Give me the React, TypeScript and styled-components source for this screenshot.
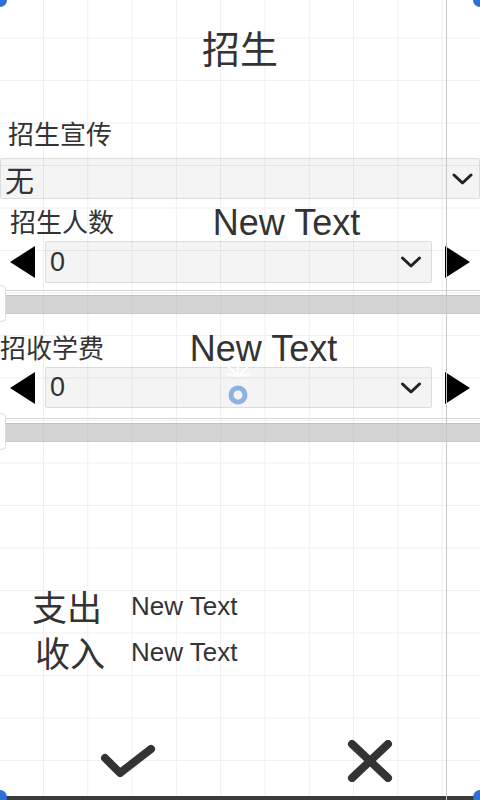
import React from 'react';
import styled, { createGlobalStyle } from 'styled-components';

const GlobalStyle = createGlobalStyle`
  html, body {
    margin: 0;
    padding: 0;
    background: #ffffff;
  }
  * {
    box-sizing: border-box;
  }
`;

const CJK = `"Noto Sans CJK SC", "Noto Sans", sans-serif`;
const LATIN = `"Liberation Sans", Arial, sans-serif`;

const Screen = styled.div`
  position: relative;
  width: 480px;
  height: 800px;
  overflow: hidden;
  display: flex;
  flex-direction: column;
  background-color: #ffffff;
  background-image:
    linear-gradient(to right, #efefef 1px, transparent 1px),
    linear-gradient(to bottom, #efefef 1px, transparent 1px);
  background-size: 44.3px 42.5px;
  background-position: -1.3px 37.5px;
  color: #333333;
`;

const Title = styled.h1`
  margin: 0;
  height: 95px;
  display: flex;
  align-items: center;
  justify-content: center;
  font-family: ${CJK};
  font-size: 38px;
  font-weight: 400;
  color: #333;
  padding-bottom: 2px;
`;

const Label = styled.div<{ $indent?: number }>`
  font-family: ${CJK};
  font-size: 26px;
  line-height: 30px;
  color: #333;
  padding-left: ${p => p.$indent ?? 0}px;
  white-space: nowrap;
`;

const SectionLabel = styled(Label)`
  margin-top: 23px;
`;

const Select = styled.div<{ $height: number }>`
  flex: 1;
  height: ${p => p.$height}px;
  display: flex;
  align-items: center;
  justify-content: space-between;
  background: rgba(0, 0, 0, 0.045);
  border: 1px solid rgba(0, 0, 0, 0.1);
  border-radius: 2px;
`;

const WideSelect = styled(Select)`
  flex: none;
  margin-top: 10px;
  padding: 0 6px 0 4px;
`;

const SelectValue = styled.span<{ $size: number; $cjk?: boolean }>`
  font-family: ${p => (p.$cjk ? CJK : LATIN)};
  font-size: ${p => p.$size}px;
  color: #333;
`;

const HeaderRow = styled.div<{ $right: number; $top: number }>`
  display: flex;
  align-items: center;
  height: 40px;
  margin-top: ${p => p.$top}px;
  padding-right: ${p => p.$right}px;
`;

const Caption = styled.div`
  flex: 1;
  text-align: center;
  font-family: ${LATIN};
  font-size: 36px;
  line-height: 36px;
  color: #333;
  padding-top: 4px;
`;

const StepperRow = styled.div`
  display: flex;
  align-items: center;
  padding: 0 10px;
  gap: 9px;
`;

const StepSelect = styled(Select)`
  padding: 0 8px 0 4px;
  margin-right: 3px;
`;

const SliderBox = styled.div<{ $top: number }>`
  position: relative;
  height: 37px;
  margin-top: ${p => p.$top}px;
`;

const Track = styled.div`
  position: absolute;
  left: 0;
  right: 0;
  top: 10px;
  height: 19px;
  background: rgba(170, 170, 170, 0.5);
  border-top: 1px solid rgba(0, 0, 0, 0.08);
  border-bottom: 1px solid rgba(0, 0, 0, 0.05);
`;

const TrackLine = styled.div`
  position: absolute;
  left: 0;
  right: 0;
  top: 5px;
  height: 1px;
  background: #d6d6d6;
`;

const Handle = styled.div`
  position: absolute;
  left: -3px;
  top: 0;
  width: 9px;
  height: 37px;
  border-radius: 5px;
  background: #ffffff;
  border: 1px solid #dadada;
`;

const Summary = styled.div`
  margin-top: auto;
  display: flex;
  flex-direction: column;
  gap: 2px;
  padding-left: 32px;
`;

const SummaryRow = styled.div<{ $shift?: number }>`
  display: flex;
  align-items: center;
  height: 44px;
  padding-left: ${p => p.$shift ?? 0}px;
`;

const SummaryKey = styled.span<{ $width: number }>`
  font-family: ${CJK};
  font-size: 35px;
  line-height: 40px;
  color: #333;
  width: ${p => p.$width}px;
`;

const SummaryValue = styled.span`
  font-family: ${LATIN};
  font-size: 26px;
  color: #333;
  margin-left: 1px;
`;

const Footer = styled.div`
  display: flex;
  justify-content: space-between;
  align-items: center;
  height: 80px;
  margin-top: 42px;
  padding: 10px 87px 0 100px;
`;

const IconButton = styled.button`
  border: none;
  background: transparent;
  padding: 0;
  display: flex;
  cursor: pointer;
`;

const BottomBar = styled.div`
  height: 4px;
  background: #3a3a3a;
`;

const Divider = styled.div`
  position: absolute;
  top: 0;
  bottom: 0;
  left: 446px;
  width: 1px;
  background: #c8c8c8;
`;

const CornerDot = styled.div<{ $x: number; $y: number }>`
  position: absolute;
  left: ${p => p.$x - 7}px;
  top: ${p => p.$y - 7}px;
  width: 14px;
  height: 14px;
  border-radius: 50%;
  background: #2f6fd8;
`;

const Gizmo = styled.svg`
  position: absolute;
  left: 222px;
  top: 362px;
`;

const Chevron = ({ w = 21 }: { w?: number }) => (
  <svg width={w} height={12} viewBox="0 0 21 12">
    <polyline points="2,2 10.5,10 19,2" fill="none" stroke="#222" strokeWidth="3" strokeLinecap="round" strokeLinejoin="round" />
  </svg>
);

const Arrow = ({ dir }: { dir: 'left' | 'right' }) => (
  <svg width={26} height={34} viewBox="0 0 26 34">
    {dir === 'left' ? <polygon points="0,17 25,1 25,33" fill="#000" /> : <polygon points="1,1 26,17 1,33" fill="#000" />}
  </svg>
);

const CheckIcon = () => (
  <svg width={56} height={36} viewBox="0 0 56 36">
    <polyline points="5,15 20,30 51,6" fill="none" stroke="#333" strokeWidth="8" strokeLinecap="round" strokeLinejoin="round" />
  </svg>
);

const CloseIcon = () => (
  <svg width={46} height={42} viewBox="0 0 46 42">
    <path d="M5 4 L41 38 M41 4 L5 38" fill="none" stroke="#333" strokeWidth="8" strokeLinecap="round" />
  </svg>
);

function Stepper({ value, select }: { value: string; select: number }) {
  return (
    <StepperRow>
      <Arrow dir="left" />
      <StepSelect $height={select}>
        <SelectValue $size={27}>{value}</SelectValue>
        <Chevron w={24} />
      </StepSelect>
      <Arrow dir="right" />
    </StepperRow>
  );
}

function Slider({ top }: { top: number }) {
  return (
    <SliderBox $top={top}>
      <TrackLine />
      <Track />
      <Handle />
    </SliderBox>
  );
}

export default function App() {
  return (
    <>
      <GlobalStyle />
      <Screen>
        <Title>招生</Title>

        <SectionLabel $indent={8}>招生宣传</SectionLabel>
        <WideSelect $height={41}>
          <SelectValue $size={29} $cjk>无</SelectValue>
          <Chevron />
        </WideSelect>

        <HeaderRow $top={2} $right={21}>
          <Label $indent={10}>招生人数</Label>
          <Caption>New Text</Caption>
        </HeaderRow>
        <Stepper value="0" select={42} />
        <Slider top={2} />

        <HeaderRow $top={5} $right={57}>
          <Label>招收学费</Label>
          <Caption>New Text</Caption>
        </HeaderRow>
        <Stepper value="0" select={41} />
        <Slider top={5} />

        <Summary>
          <SummaryRow>
            <SummaryKey $width={98}>支出</SummaryKey>
            <SummaryValue>New Text</SummaryValue>
          </SummaryRow>
          <SummaryRow $shift={3}>
            <SummaryKey $width={95}>收入</SummaryKey>
            <SummaryValue>New Text</SummaryValue>
          </SummaryRow>
        </Summary>

        <Footer>
          <IconButton aria-label="确定">
            <CheckIcon />
          </IconButton>
          <IconButton aria-label="取消">
            <CloseIcon />
          </IconButton>
        </Footer>
        <BottomBar />

        <Divider />
        <Gizmo width={34} height={46} viewBox="0 0 34 46">
          <g stroke="#ffffff" strokeWidth="2" opacity="0.9">
            <line x1="16" y1="14" x2="6" y2="4" />
            <line x1="16" y1="14" x2="26" y2="4" />
            <line x1="16" y1="14" x2="16" y2="2" />
            <line x1="16" y1="14" x2="4" y2="12" />
            <line x1="16" y1="14" x2="28" y2="12" />
          </g>
          <circle cx="16" cy="33" r="7" fill="none" stroke="#8db2e2" strokeWidth="5" />
        </Gizmo>
        <CornerDot $x={0} $y={0} />
        <CornerDot $x={480} $y={0} />
        <CornerDot $x={0} $y={797} />
        <CornerDot $x={480} $y={797} />
      </Screen>
    </>
  );
}
